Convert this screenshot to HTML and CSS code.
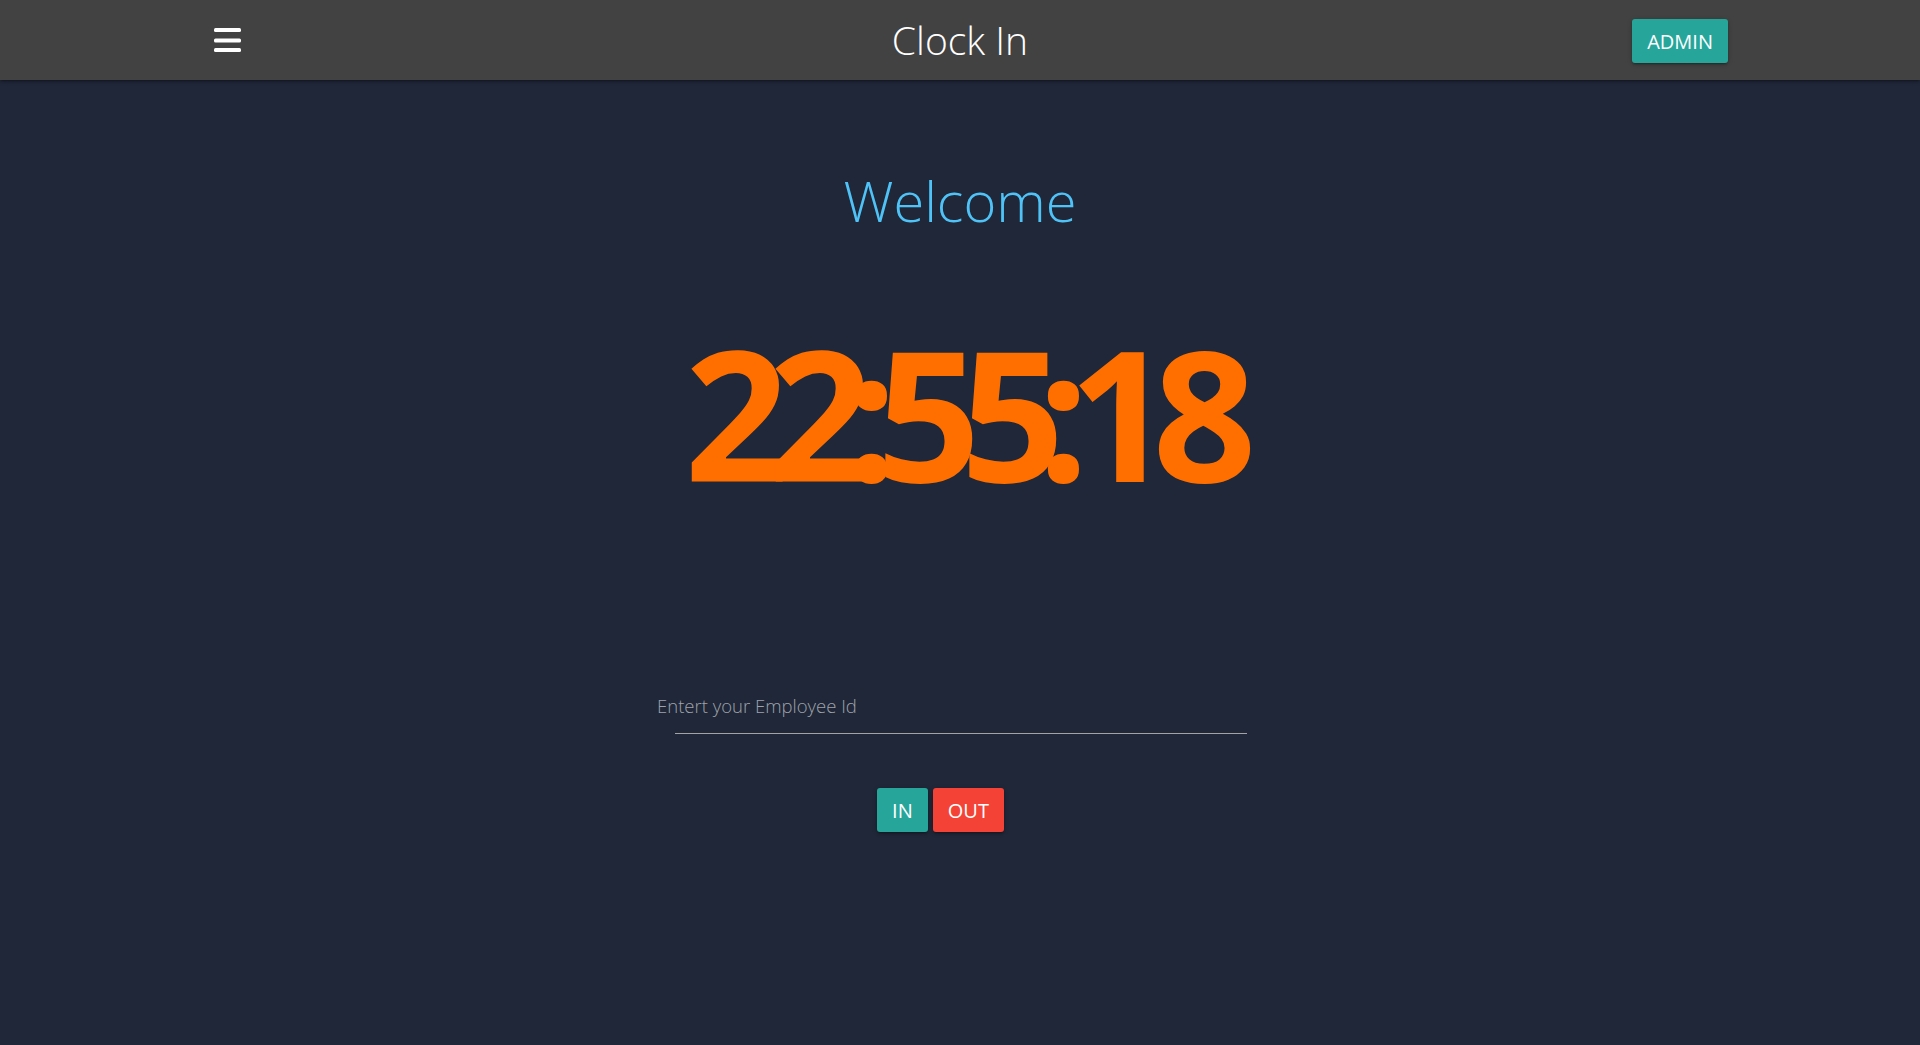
FILE: index.html
```html
<!DOCTYPE html>
<html lang="en">
<head>
<meta charset="utf-8">
<title>Clock In</title>
<link rel="stylesheet" href="styles.css">
</head>
<body>
<nav class="navbar">
  <div class="nav-left">
    <svg class="menu-icon" width="27" height="24" viewBox="0 0 27 24" aria-label="menu">
      <rect x="0" y="0" width="27" height="4" rx="1.5" fill="#fff"/>
      <rect x="0" y="10.5" width="27" height="4" rx="1.5" fill="#fff"/>
      <rect x="0" y="20" width="27" height="4" rx="1.5" fill="#fff"/>
    </svg>
  </div>
  <div class="brand">Clock In</div>
  <div class="nav-right">
    <button class="btn btn-teal">ADMIN</button>
  </div>
</nav>
<main class="main">
  <h1 class="welcome">Welcome</h1>
  <div class="clock">22<span class="colon">:</span>55<span class="colon">:</span>18</div>
  <div class="field">
    <label class="field-label" for="emp">Entert your Employee Id</label>
    <input id="emp" class="field-input" type="text">
  </div>
  <div class="actions">
    <button class="btn btn-teal">IN</button>
    <button class="btn btn-red">OUT</button>
  </div>
</main>
</body>
</html>
```

FILE: styles.css
```css
* { box-sizing: border-box; }
html, body { margin: 0; padding: 0; }
body {
  background: #202738;
  font-family: "Open Sans", "Noto Sans", sans-serif;
  min-height: 1045px;
  color: #fff;
}
.navbar {
  height: 80px;
  background: #424242;
  display: grid;
  grid-template-columns: 1fr auto 1fr;
  align-items: center;
  padding: 0 192px;
  box-shadow: 0 2px 2px 0 rgba(0,0,0,.14), 0 3px 1px -2px rgba(0,0,0,.12), 0 1px 5px 0 rgba(0,0,0,.2);
  position: relative;
}
.nav-left { display: flex; align-items: center; padding-left: 22px; }
.menu-icon { display: block; }
.brand {
  font-weight: 300;
  font-size: 39px;
  line-height: 80px;
  color: #fff;
}
.nav-right { display: flex; justify-content: flex-end; padding-top: 2px; }
.btn {
  border: none;
  height: 44px;
  padding: 0 15px;
  border-radius: 3px;
  font-family: "Open Sans", "Noto Sans", sans-serif;
  font-size: 20px;
  color: #fff;
  letter-spacing: 0;
  box-shadow: 0 2px 2px 0 rgba(0,0,0,.14), 0 3px 1px -2px rgba(0,0,0,.12), 0 1px 5px 0 rgba(0,0,0,.2);
  cursor: pointer;
}
.btn-teal { background: #26a69a; }
.btn-red { background: #f44336; }
.main {
  display: flex;
  flex-direction: column;
  align-items: center;
}
.welcome {
  margin: 92px 0 0;
  font-weight: 300;
  font-size: 56px;
  line-height: 57px;
  color: #4fc3f7;
}
.clock {
  margin: 91px 0 0 1px;
  font-weight: 700;
  font-size: 182px;
  line-height: 182px;
  letter-spacing: -20px;
  color: #ff6f00;
  white-space: nowrap;
}
.colon { margin-left: -7px; margin-right: -1px; }
.field {
  position: relative;
  width: 572px;
  margin: 187px 0 0 2px;
}
.field-label {
  position: absolute;
  left: -18px;
  top: 4px;
  font-size: 18.5px;
  font-weight: 300;
  color: #9ea3ab;
}
.field-input {
  display: block;
  width: 100%;
  height: 45px;
  background: transparent;
  border: none;
  border-bottom: 1px solid #a3a3a3;
  outline: none;
  color: #fff;
  font-size: 18px;
}
.actions {
  display: flex;
  gap: 5px;
  margin: 54px 39px 0 0;
}
```
